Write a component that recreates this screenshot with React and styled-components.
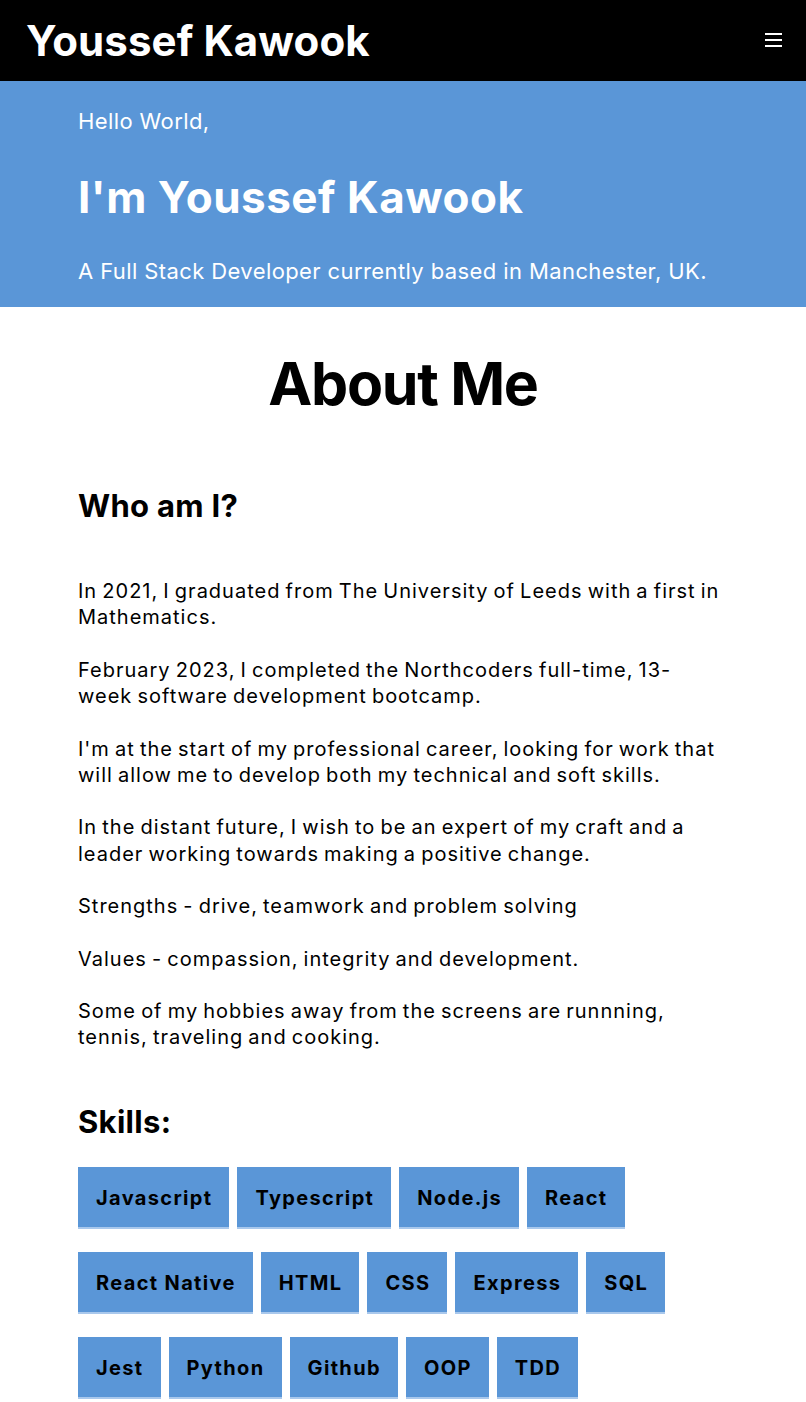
import React from "react";
import styled, { createGlobalStyle } from "styled-components";

const GlobalStyle = createGlobalStyle`
  body {
    margin: 0;
    background: #fff;
    font-family: Inter, "Noto Sans", sans-serif;
    color: #000;
  }
`;

const Header = styled.header`
  background-color: #000;
  height: 81px;
  display: flex;
  align-items: center;
  justify-content: space-between;
  padding: 0 24px 0 26px;
  box-sizing: border-box;
  h1 {
    margin: 0;
    color: #fff;
    font-size: 42px;
    font-weight: 700;
    letter-spacing: 0.1px;
  }
`;

const MenuButton = styled.button`
  background: none;
  border: none;
  padding: 0;
  width: 17px;
  height: 14px;
  margin-top: -2px;
  display: flex;
  flex-direction: column;
  justify-content: space-between;
  span {
    display: block;
    height: 2px;
    background: #fff;
  }
`;

const Hero = styled.section`
  background-color: #5a96d7;
  color: #fff;
  padding: 26px 78px 0;
  height: 226px;
  box-sizing: border-box;
  p {
    margin: 0;
    font-size: 22px;
    line-height: 28px;
    letter-spacing: 0.4px;
  }
  h2 {
    margin: 35px 0 33px;
    font-size: 44px;
    line-height: 54px;
    font-weight: 700;
    letter-spacing: 0.5px;
  }
`;

const Main = styled.main`
  padding: 0 84px 40px 78px;
`;

const Title = styled.h1`
  text-align: center;
  font-size: 59px;
  font-weight: 700;
  letter-spacing: -1.3px;
  margin: 40px 0 0;
  padding-left: 6px;
  line-height: 74px;
`;

const SubHeading = styled.h2`
  font-size: 31px;
  font-weight: 700;
  letter-spacing: 0.3px;
  margin: ${(props) => props.$top} 0 ${(props) => props.$bottom};
  line-height: 38px;
`;

const Paragraph = styled.p`
  font-size: 20px;
  line-height: 26.25px;
  letter-spacing: 1px;
  word-spacing: -1.5px;
  margin: 0 0 26.25px;
`;

const Skills = styled.div`
  display: flex;
  flex-wrap: wrap;
  gap: 23px 8px;
`;

const Skill = styled.div`
  background-color: #5a96d7;
  border-bottom: 2px solid #a9c8ec;
  height: 62px;
  box-sizing: border-box;
  padding: 2px 17px 0 18px;
  display: flex;
  align-items: center;
  font-size: 20px;
  font-weight: 700;
  letter-spacing: 1.35px;
`;

const paragraphs = [
  "In 2021, I graduated from The University of Leeds with a first in Mathematics.",
  "February 2023, I completed the Northcoders full-time, 13-week software development bootcamp.",
  "I'm at the start of my professional career, looking for work that will allow me to develop both my technical and soft skills.",
  "In the distant future, I wish to be an expert of my craft and a leader working towards making a positive change.",
  "Strengths - drive, teamwork and problem solving",
  "Values - compassion, integrity and development.",
  "Some of my hobbies away from the screens are runnning, tennis, traveling and cooking.",
];

const skills = [
  "Javascript",
  "Typescript",
  "Node.js",
  "React",
  "React Native",
  "HTML",
  "CSS",
  "Express",
  "SQL",
  "Jest",
  "Python",
  "Github",
  "OOP",
  "TDD",
];

const App = () => {
  return (
    <>
      <GlobalStyle />
      <Header>
        <h1>Youssef Kawook</h1>
        <MenuButton aria-label="menu">
          <span />
          <span />
          <span />
        </MenuButton>
      </Header>
      <Hero>
        <p>Hello World,</p>
        <h2>I'm Youssef Kawook</h2>
        <p>A Full Stack Developer currently based in Manchester, UK.</p>
      </Hero>
      <Main>
        <Title>About Me</Title>
        <SubHeading $top="66px" $bottom="53px">Who am I?</SubHeading>
        {paragraphs.map((text) => (
          <Paragraph key={text}>{text}</Paragraph>
        ))}
        <SubHeading $top="52px" $bottom="26px">Skills:</SubHeading>
        <Skills>
          {skills.map((skill) => (
            <Skill key={skill}>{skill}</Skill>
          ))}
        </Skills>
      </Main>
    </>
  );
};

export default App;
